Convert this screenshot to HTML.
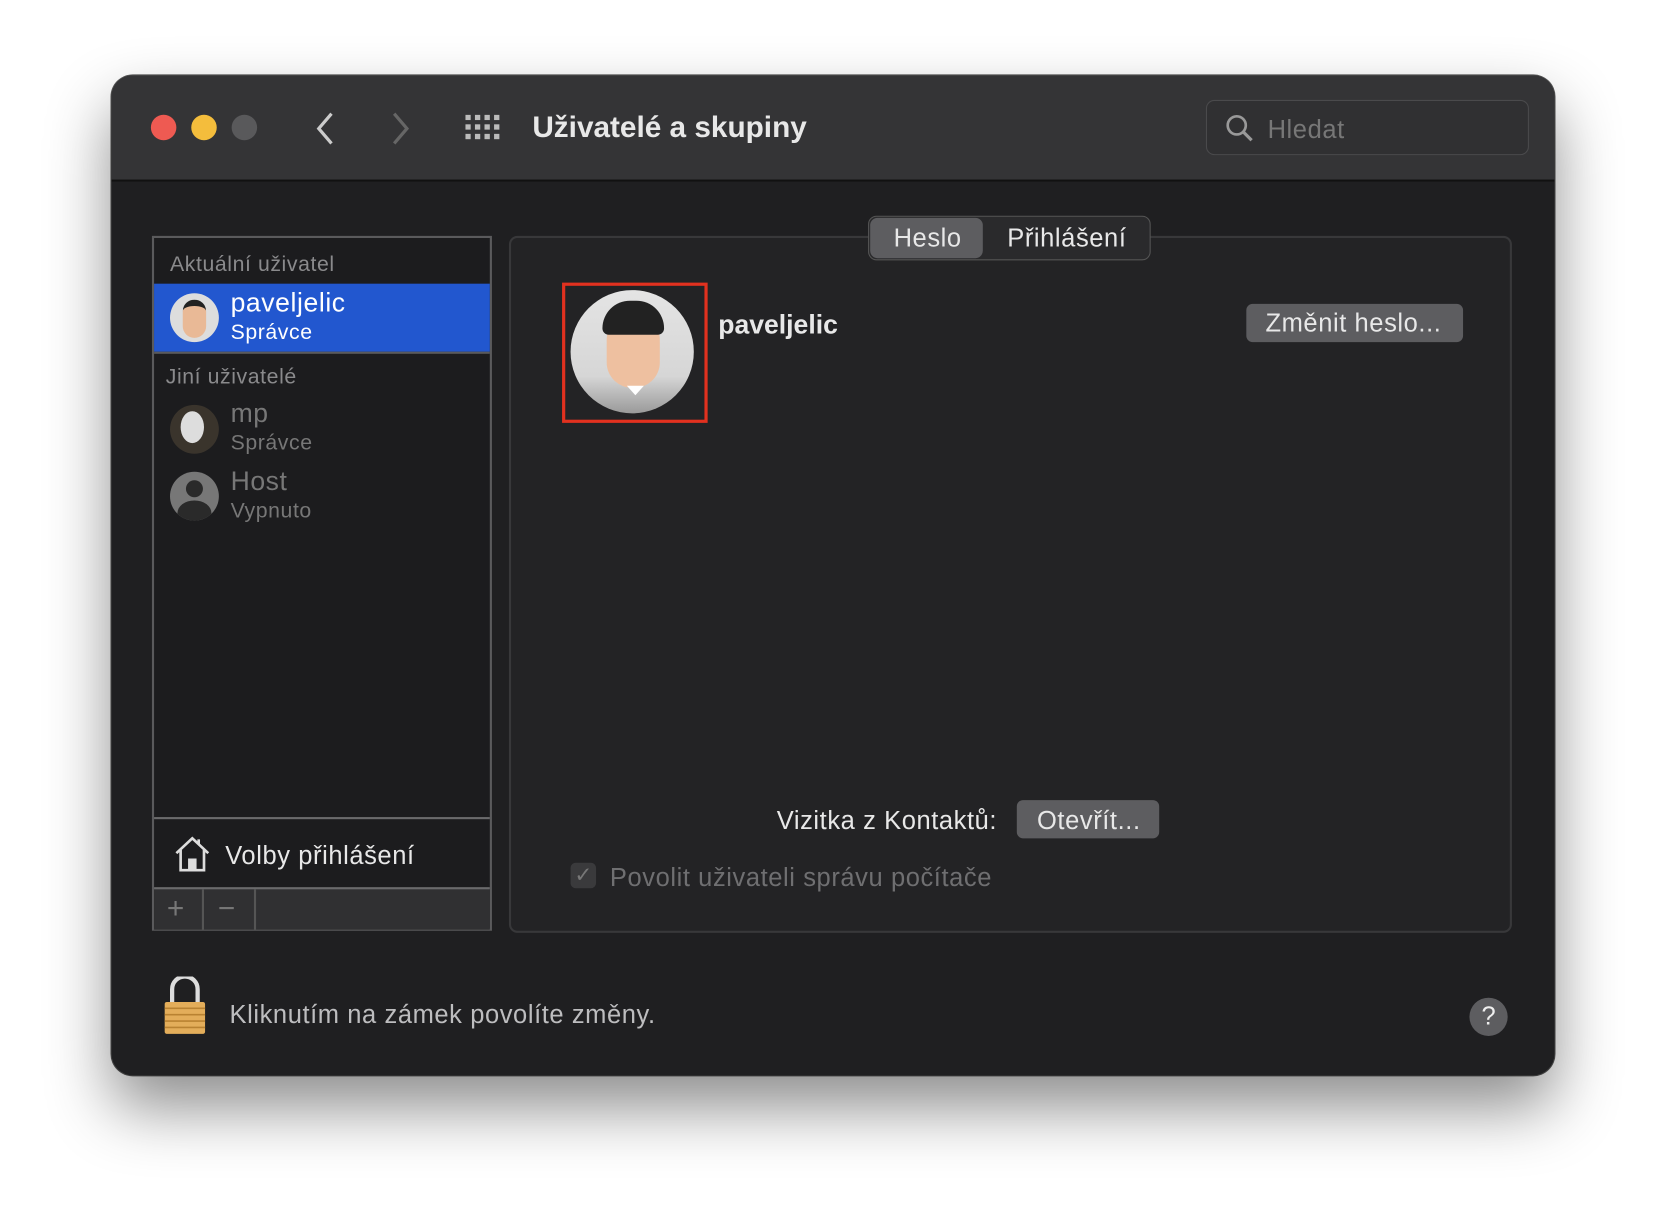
<!DOCTYPE html>
<html><head><meta charset="utf-8"><style>
html,body{margin:0;padding:0;background:#fff;overflow:hidden;width:1666px;height:1224px}
#s{position:absolute;left:0;top:0;width:1568px;height:1152px;transform:scale(1.0625);transform-origin:0 0;font-family:"Liberation Sans",sans-serif}
.a{position:absolute}
.win{left:105px;top:71px;width:1358px;height:941px;background:#1f1f21;border-radius:20px;box-shadow:0 30px 60px rgba(0,0,0,.45),0 0 0 1px #555;overflow:hidden}
.tb{left:0;top:0;width:1358px;height:98px;background:#343436;border-bottom:2px solid #111}
.dot{width:24px;height:24px;border-radius:50%;top:37px}
.t{color:#e8e8e8;white-space:nowrap;letter-spacing:.55px}
.g{letter-spacing:.55px;white-space:nowrap}
</style></head><body><div id="s">
<div class="a win">
 <div class="a tb">
  <div class="a dot" style="left:37px;background:#ee5a52"></div>
  <div class="a dot" style="left:75px;background:#f4bd3c"></div>
  <div class="a dot" style="left:113px;background:#59595b"></div>
  <svg class="a" style="left:190px;top:33px" width="24" height="34"><path d="M17 3 L5 17 L17 31" stroke="#ccc" stroke-width="3" fill="none"/></svg>
  <svg class="a" style="left:260px;top:33px" width="24" height="34"><path d="M6 3 L18 17 L6 31" stroke="#666" stroke-width="3" fill="none"/></svg>
  <svg class="a" style="left:333px;top:37px" width="34" height="26" fill="#bbb">
   <rect x="0" y="0" width="5" height="5"/><rect x="9" y="0" width="5" height="5"/><rect x="18" y="0" width="5" height="5"/><rect x="27" y="0" width="5" height="5"/>
   <rect x="0" y="9" width="5" height="5"/><rect x="9" y="9" width="5" height="5"/><rect x="18" y="9" width="5" height="5"/><rect x="27" y="9" width="5" height="5"/>
   <rect x="0" y="18" width="5" height="5"/><rect x="9" y="18" width="5" height="5"/><rect x="18" y="18" width="5" height="5"/><rect x="27" y="18" width="5" height="5"/></svg>
  <div class="a t" style="left:396px;top:33px;font-size:28px;font-weight:bold;letter-spacing:0">Uživatelé a skupiny</div>
  <div class="a" style="left:1030px;top:23px;width:302px;height:50px;border:1px solid #4a4a4c;border-radius:8px;background:#303032"></div>
  <svg class="a" style="left:1048px;top:36px" width="28" height="28"><circle cx="11" cy="11" r="8.5" stroke="#999" stroke-width="2.5" fill="none"/><path d="M17 17 L25 25" stroke="#999" stroke-width="3"/></svg>
  <div class="a g" style="left:1088px;top:38px;font-size:24px;color:#777">Hledat</div>
 </div>
 <div class="a" style="left:38px;top:151px;width:316px;height:650px;border:2px solid #5a5a5c;background:#1c1c1e"></div>
 <div class="a g" style="left:55px;top:167px;font-size:20px;color:#8a8a8c">Aktuální uživatel</div>
 <div class="a" style="left:40px;top:196px;width:316px;height:64px;background:#2257cf"></div>
 <div class="a" style="left:55px;top:205px;width:46px;height:46px;border-radius:50%;background:#ddd"><div class="a" style="left:12px;top:6px;width:22px;height:30px;border-radius:11px;background:#e9b996;border-top:6px solid #222"></div></div>
 <div class="a t" style="left:112px;top:200px;font-size:25px;color:#fff">paveljelic</div>
 <div class="a t" style="left:112px;top:231px;font-size:20px;color:#fff">Správce</div>
 <div class="a" style="left:40px;top:260px;width:316px;height:2px;background:#5a5a5c"></div>
 <div class="a g" style="left:51px;top:273px;font-size:20px;color:#8a8a8c">Jiní uživatelé</div>
 <div class="a" style="left:55px;top:310px;width:46px;height:46px;border-radius:50%;background:#3a342c"><div class="a" style="left:10px;top:6px;width:22px;height:30px;border-radius:50%;background:#ddd"></div></div>
 <div class="a g" style="left:112px;top:304px;font-size:25px;color:#777">mp</div>
 <div class="a g" style="left:112px;top:335px;font-size:20px;color:#777">Správce</div>
 <div class="a" style="left:55px;top:373px;width:46px;height:46px;border-radius:50%;background:#777;overflow:hidden"><div class="a" style="left:15px;top:8px;width:16px;height:16px;border-radius:50%;background:#2a2a2a"></div><div class="a" style="left:7px;top:27px;width:32px;height:24px;border-radius:50%;background:#2a2a2a"></div></div>
 <div class="a g" style="left:112px;top:368px;font-size:25px;color:#777">Host</div>
 <div class="a g" style="left:112px;top:399px;font-size:20px;color:#777">Vypnuto</div>
 <div class="a" style="left:40px;top:698px;width:316px;height:2px;background:#6a6a6c"></div>
 <svg class="a" style="left:58px;top:715px" width="36" height="36"><path d="M3 17 L18 3 L33 17 M7 14 V33 H29 V14 M24 8 V4" stroke="#ddd" stroke-width="2.5" fill="none"/><rect x="14" y="22" width="8" height="11" fill="#ddd"/></svg>
 <div class="a t" style="left:107px;top:721px;font-size:24px">Volby přihlášení</div>
 <div class="a" style="left:40px;top:764px;width:316px;height:38px;background:#303032;border-top:2px solid #6a6a6c"></div>
 <div class="a" style="left:85px;top:766px;width:2px;height:38px;background:#555"></div>
 <div class="a" style="left:134px;top:766px;width:2px;height:38px;background:#555"></div>
 <div class="a" style="left:52px;top:768px;font-size:28px;color:#777">+</div>
 <div class="a" style="left:100px;top:768px;font-size:28px;color:#777">−</div>
 <div class="a" style="left:374px;top:151px;width:940px;height:652px;border:2px solid #38383a;border-radius:8px;background:#232325"></div>
 <div class="a" style="left:712px;top:132px;width:264px;height:40px;border:1px solid #555;border-radius:8px;background:#2a2a2c"></div>
 <div class="a" style="left:714px;top:134px;width:106px;height:38px;border-radius:7px;background:#5d5d60"></div>
 <div class="a t" style="left:736px;top:140px;font-size:24px">Heslo</div>
 <div class="a t" style="left:843px;top:140px;font-size:24px">Přihlášení</div>
 <div class="a" style="left:424px;top:195px;width:131px;height:126px;border:3px solid #e2311f"></div>
 <div class="a" style="left:432px;top:202px;width:116px;height:116px;border-radius:50%;background:linear-gradient(#e4e4e4,#d6d6d6 70%,#9a9a9a);overflow:hidden">
  <div class="a" style="left:34px;top:22px;width:50px;height:70px;border-radius:25px 25px 24px 24px;background:#eec0a0"></div>
  <div class="a" style="left:30px;top:10px;width:58px;height:32px;border-radius:26px 26px 6px 6px;background:#222"></div>
  <div class="a" style="left:53px;top:90px;border:8px solid transparent;border-top:9px solid #fff"></div>
 </div>
 <div class="a t" style="left:571px;top:221px;font-size:25px;font-weight:bold;letter-spacing:0">paveljelic</div>
 <div class="a" style="left:1068px;top:215px;width:204px;height:36px;border-radius:6px;background:#5d5d60"></div>
 <div class="a t" style="left:1086px;top:220px;font-size:24px">Změnit heslo...</div>
 <div class="a t" style="left:626px;top:688px;font-size:24px">Vizitka z Kontaktů:</div>
 <div class="a" style="left:852px;top:682px;width:134px;height:36px;border-radius:6px;background:#5d5d60"></div>
 <div class="a t" style="left:871px;top:688px;font-size:24px">Otevřít...</div>
 <div class="a" style="left:432px;top:741px;width:24px;height:24px;border-radius:5px;background:#3a3a3c;color:#777;font-size:20px;text-align:center;line-height:24px">✓</div>
 <div class="a g" style="left:469px;top:742px;font-size:24px;color:#6f6f71">Povolit uživateli správu počítače</div>
 <svg class="a" style="left:47px;top:848px" width="44" height="56"><path d="M10 24 V12 A12 12 0 0 1 34 12 V24" stroke="#ddd" stroke-width="4" fill="none"/><rect x="3" y="24" width="38" height="30" rx="2" fill="#e3ad5a"/><g stroke="#b98232" stroke-width="1.5"><path d="M3 30H41M3 36H41M3 42H41M3 48H41"/></g></svg>
 <div class="a g" style="left:111px;top:871px;font-size:24px;color:#bdbdbf">Kliknutím na zámek povolíte změny.</div>
 <div class="a" style="left:1278px;top:868px;width:36px;height:36px;border-radius:50%;background:#5d5d60;color:#eee;font-size:24px;text-align:center;line-height:36px">?</div>
</div>
</div></body></html>
